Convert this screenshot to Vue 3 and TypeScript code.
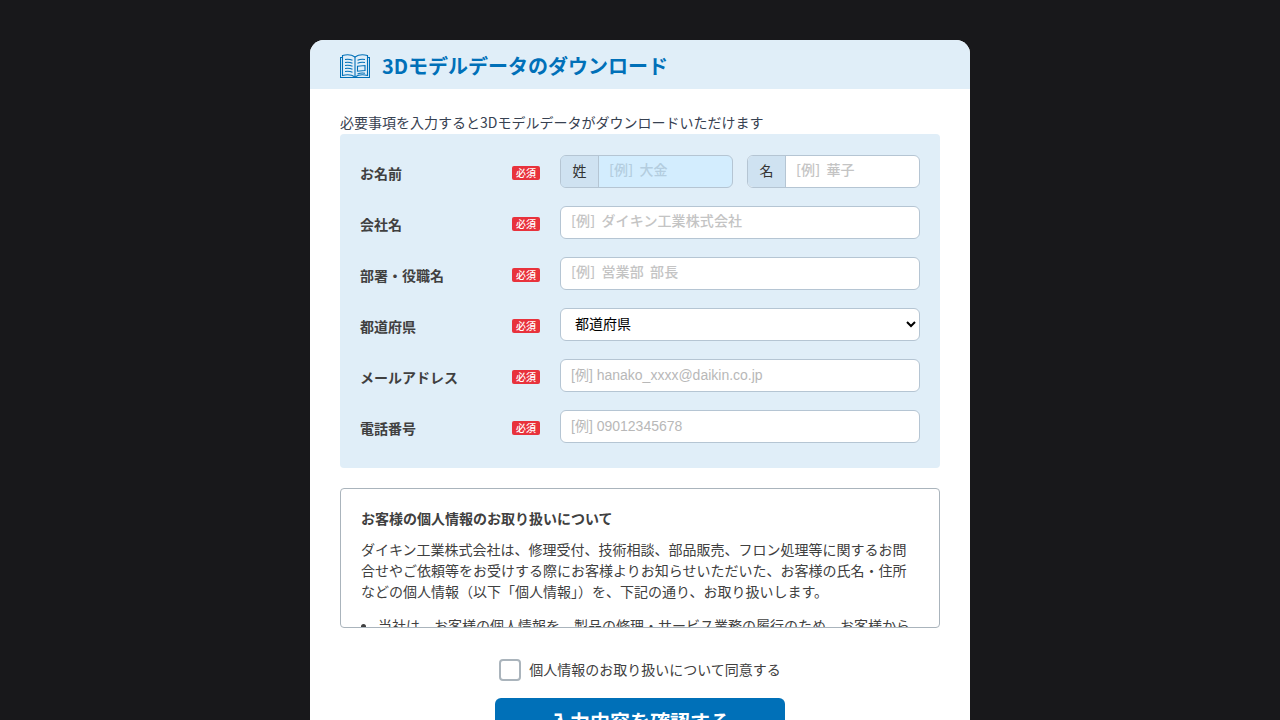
<script setup lang="ts">
interface Row { label: string; kind: 'name' | 'text' | 'select'; placeholder?: string; latin?: boolean }
const rows: Row[] = [
  { label: 'お名前', kind: 'name' },
  { label: '会社名', kind: 'text', placeholder: '[例] ダイキン工業株式会社' },
  { label: '部署・役職名', kind: 'text', placeholder: '[例] 営業部 部長' },
  { label: '都道府県', kind: 'select' },
  { label: 'メールアドレス', kind: 'text', placeholder: '[例] hanako_xxxx@daikin.co.jp', latin: true },
  { label: '電話番号', kind: 'text', placeholder: '[例] 09012345678', latin: true },
]
</script>

<template>
  <div class="page">
    <main class="card">
      <header class="head">
        <svg class="book" width="30" height="24" viewBox="0 0 30 24" fill="none" stroke="#0070b8" stroke-width="1.1">
          <path d="M2.500 3.500H.5v20h29v-20h-2" />
          <path d="M2.500 21.500V1.500c4.500-1.200 9-1 12.500 1.500c3.500-2.500 8-2.700 12.500-1.500v20c-4.500-1.200-9-1-12.500 1.500c-3.500-2.500-8-2.700-12.500-1.500z" />
          <path d="M15 3v19" />
          <path d="M5 5.500c2.500-.5 5-.3 7.500.7M5 8.500c2.500-.5 5-.3 7.500.7M5 11.500c2.500-.5 5-.3 7.500.7M5 14.500c2.500-.5 5-.3 7.500.7M5 17.500c2.500-.5 5-.3 7.500.7M17.500 6.200c2.500-1 5-1.200 7.500-.7M17.500 9.200c2.500-1 5-1.200 7.500-.7M17.500 12.200l7.500-.7v5l-7.500.7zM17.500 20c2.500-1 5-1.200 7.500-.7" />
        </svg>
        <h1>3Dモデルデータのダウンロード</h1>
      </header>
      <div class="body">
        <p class="lead">必要事項を入力すると3Dモデルデータがダウンロードいただけます</p>
        <section class="form">
          <div v-for="row in rows" :key="row.label" class="row">
            <span class="label">{{ row.label }}</span>
            <span class="req">必須</span>
            <div v-if="row.kind === 'name'" class="names">
              <div class="group focus">
                <span class="addon">姓</span>
                <input class="inner" placeholder="[例] 大金" />
              </div>
              <div class="group">
                <span class="addon">名</span>
                <input class="inner" placeholder="[例] 華子" />
              </div>
            </div>
            <select v-else-if="row.kind === 'select'" class="field select">
              <option>都道府県</option>
            </select>
            <input v-else class="field" :class="{ latin: row.latin }" :placeholder="row.placeholder" />
          </div>
        </section>
        <section class="terms">
          <h2>お客様の個人情報のお取り扱いについて</h2>
          <p>ダイキン工業株式会社は、修理受付、技術相談、部品販売、フロン処理等に関するお問合せやご依頼等をお受けする際にお客様よりお知らせいただいた、お客様の氏名・住所などの個人情報（以下「個人情報」）を、下記の通り、お取り扱いします。</p>
          <ul>
            <li>当社は、お客様の個人情報を、製品の修理・サービス業務の履行のため、お客様から</li>
          </ul>
        </section>
        <label class="agree">
          <span class="box"></span>
          <span class="agree-text">個人情報のお取り扱いについて同意する</span>
        </label>
        <button class="submit" type="button">入力内容を確認する</button>
      </div>
    </main>
  </div>
</template>

<style>
html, body { margin: 0; background: #18181b; overflow: hidden; }
</style>

<style scoped>
.page {
  height: 720px;
  overflow: hidden;
  padding-top: 40px;
  box-sizing: border-box;
  background: #18181b;
  font-family: "Noto Sans CJK JP", "Noto Sans", sans-serif;
  color: #404040;
}
.card {
  width: 660px;
  margin: 0 auto;
  background: #fff;
  border-radius: 14px 14px 0 0;
  overflow: hidden;
}
.head {
  height: 49px;
  box-sizing: border-box;
  padding: 2px 30px 0;
  background: #e0eef8;
  display: flex;
  align-items: center;
  gap: 12px;
}
.book { flex: none; }
.head h1 {
  margin: 0;
  font-size: 20px;
  font-weight: 700;
  line-height: 1;
  color: #0070b8;
}
.body { padding: 23px 30px 0; display: flex; flex-direction: column; }
.lead { margin: 0; padding-bottom: 1px; font-size: 14px; line-height: 21px; color: #374151; }
.form {
  background: #e0eef8;
  border-radius: 4px;
  padding: 21px 20px 25px;
  display: flex;
  flex-direction: column;
  gap: 18px;
}
.row { display: flex; align-items: center; height: 33px; }
.label { flex: none; width: 152px; font-size: 14px; font-weight: 700; color: #404040; position: relative; top: 1px; }
.req {
  flex: none;
  width: 28px;
  height: 14px;
  margin-right: 20px;
  background: #e8323c;
  border-radius: 2px;
  color: #fff;
  font-size: 10px;
  font-weight: 500;
  line-height: 14px;
  text-align: center;
  position: relative;
  top: 1px;
}
.names { flex: 1; min-width: 0; display: flex; gap: 14px; }
.group {
  flex: 1;
  min-width: 0;
  height: 33px;
  box-sizing: border-box;
  display: flex;
  border: 1px solid #b5c5d3;
  border-radius: 6px;
  background: #fff;
  overflow: hidden;
}
.group.focus { background: #d3edfe; }
.addon {
  width: 38px;
  flex: none;
  background: #cfe2f1;
  border-right: 1px solid #b5c5d3;
  box-sizing: border-box;
  font-size: 14px;
  line-height: 29px;
  padding-bottom: 2px;
  text-align: center;
  color: #333;
}
.inner {
  flex: 1;
  min-width: 0;
  border: 0;
  background: transparent;
  padding: 0 10px 5px;
  font: 500 14px "Noto Sans CJK JP", sans-serif;
  word-spacing: 3px;
  letter-spacing: .1px;
}
.field {
  flex: 1;
  min-width: 0;
  height: 33px;
  box-sizing: border-box;
  border: 1px solid #b5c5d3;
  border-radius: 6px;
  background: #fff;
  padding: 0 10px 5px;
  font: 500 14px "Noto Sans CJK JP", sans-serif;
  word-spacing: 3px;
  letter-spacing: .1px;
}
.field.latin {
  font-family: "Liberation Sans", "Noto Sans CJK JP", sans-serif;
  font-weight: 400;
  padding-bottom: 2px;
  word-spacing: 0;
  letter-spacing: 0;
}
.select {
  color: #000;
  font-weight: 400;
  padding-bottom: 4px;
  word-spacing: 0;
  letter-spacing: 0;
}
input::placeholder { color: #c4c4c4; opacity: 1; }
.latin::placeholder { color: #b8b8b8; }
.focus input::placeholder { color: #b4cddf; }
.terms {
  margin-top: 20px;
  height: 140px;
  box-sizing: border-box;
  border: 1px solid #aab4bc;
  border-radius: 4px;
  padding: 19px 20px 0;
  overflow: hidden;
  font-size: 14px;
  line-height: 21px;
}
.terms h2 { margin: 0 0 10px; font-size: 14px; line-height: 21px; font-weight: 700; }
.terms p { margin: 0 0 13px; }
.terms ul { margin: 0; padding-left: 17px; }
.agree {
  margin-top: 31px;
  display: flex;
  justify-content: center;
  align-items: center;
  gap: 8px;
  font-size: 14px;
  line-height: 20px;
}
.agree-text { padding-bottom: 2px; }
.box {
  width: 22px;
  height: 22px;
  box-sizing: border-box;
  border: 2px solid #aab4bc;
  border-radius: 4px;
}
.submit {
  align-self: center;
  margin-top: 17px;
  width: 290px;
  height: 50px;
  padding: 0 0 4px;
  border: 0;
  border-radius: 6px;
  background: #0070b8;
  color: #fff;
  font: 700 20px "Noto Sans CJK JP", sans-serif;
}
</style>
